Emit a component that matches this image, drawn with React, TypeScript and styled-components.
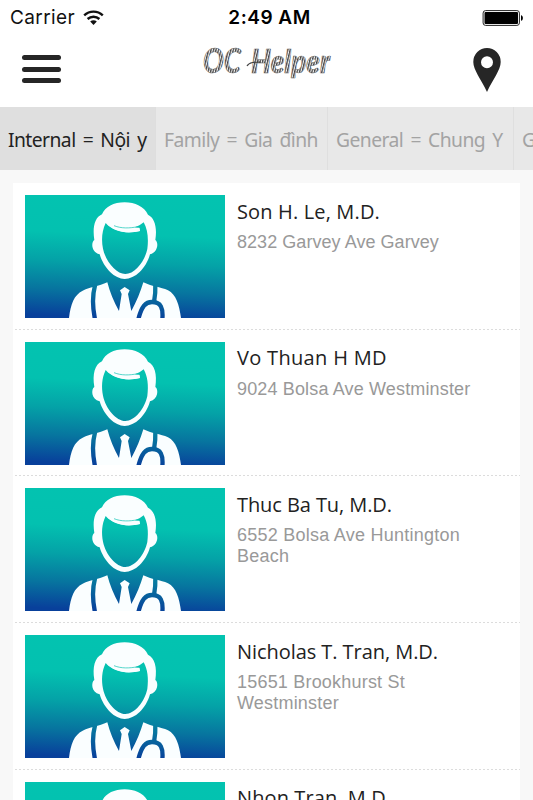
import React from 'react';
import styled, { createGlobalStyle } from 'styled-components';

const GlobalStyle = createGlobalStyle`
  html, body { margin: 0; padding: 0; background: #f8f8f8; }
  body { overflow: hidden; }
  * { box-sizing: border-box; }
`;

const Screen = styled.div`
  width: 533px;
  height: 800px;
  overflow: hidden;
  display: flex;
  flex-direction: column;
  background: #f8f8f8;
`;

const StatusBar = styled.div`
  height: 34px;
  flex: none;
  display: grid;
  grid-template-columns: 1fr auto 1fr;
  align-items: center;
  padding: 0 9px 0 10px;
  background: #fff;
  color: #111;
  font: 400 19px/34px Inter, sans-serif;
`;

const Carrier = styled.div`
  display: flex;
  align-items: center;
  gap: 8px;
  padding-top: 1px;
  letter-spacing: 0.4px;
`;

const Clock = styled.div`
  padding-left: 5px;
  font-weight: 600;
  font-size: 19px;
  letter-spacing: 0.5px;
  color: #000;
`;

const BatteryIcon = styled.svg`
  justify-self: end;
`;

const Header = styled.header`
  height: 73px;
  flex: none;
  display: flex;
  justify-content: space-between;
  align-items: flex-start;
  padding: 0 32px 0 22px;
  background: #fff;
`;

const MenuButton = styled.button`
  width: 39px;
  height: 28px;
  margin-top: 21px;
  padding: 0;
  border: 0;
  background: none;
  display: flex;
  flex-direction: column;
  justify-content: space-between;
`;

const MenuBar = styled.span`
  width: 39px;
  height: 5px;
  border-radius: 2.5px;
  background: #262626;
`;

const Logo = styled.svg`
  margin: 4px 0 0 1px;
`;

const PinButton = styled.button`
  margin-top: 14px;
  padding: 0;
  border: 0;
  background: none;
  line-height: 0;
`;

const Tabs = styled.nav`
  height: 63px;
  flex: none;
  display: flex;
  background: #e8e8e8;
`;

const Tab = styled.div<{ $width: number; $active?: boolean }>`
  flex: none;
  width: ${p => p.$width}px;
  padding: 0 0 0 8px;
  border-right: 1px solid ${p => (p.$active ? '#dedede' : '#dfdfdf')};
  background: ${p => (p.$active ? '#dfdfdf' : '#e8e8e8')};
  color: ${p => (p.$active ? '#222' : '#a3a3a3')};
  font: 400 19.3px/66px "Noto Sans", sans-serif;
  letter-spacing: -0.55px;
  word-spacing: 2.7px;
  white-space: nowrap;
`;

const List = styled.main`
  flex: none;
  margin: 13px 13px 0;
  background: #fff;
`;

const Row = styled.article`
  height: 146.67px;
  display: flex;
  gap: 12px;
  padding: 12px 12px 0;
  background: repeating-linear-gradient(90deg, #dcdcdc 0 2px, #fff 2px 4px) 2px 100% / 100% 1px no-repeat;
`;

const Info = styled.div`
  width: 250px;
`;

const Name = styled.h2<{ $spacing: number }>`
  margin: 1.6px 0 0;
  color: #222;
  font: 400 20px/30px "Open Sans", sans-serif;
  letter-spacing: ${p => p.$spacing}px;
  white-space: nowrap;
`;

const Address = styled.p<{ $spacing: number }>`
  margin: 5.4px 0 0;
  color: #999;
  font: 400 18px/21px "Liberation Sans", Arial, sans-serif;
  letter-spacing: ${p => p.$spacing}px;
`;

const Avatar = styled.svg`
  display: block;
  flex: none;
`;

function DoctorAvatar({ id }: { id: number }) {
  const g = `sky${id}`;
  const fill = `url(#${g})`;
  return (
    <Avatar width="200" height="123" viewBox="15 15 600 369" preserveAspectRatio="none">
      <defs>
        <linearGradient id={g} gradientUnits="userSpaceOnUse" x1="315" y1="15" x2="300" y2="384">
          <stop offset="0" stopColor="#03c3b0" />
          <stop offset="0.32" stopColor="#03c1b0" />
          <stop offset="0.55" stopColor="#04a2a7" />
          <stop offset="0.78" stopColor="#07759f" />
          <stop offset="1" stopColor="#08409b" />
        </linearGradient>
      </defs>
      <rect x="15" y="15" width="600" height="369" fill={fill} />
      <g fill="#fafeff">
        <path d="M314 37C281 37 255 51 246 73C224 83 217 111 223 150C213 156 213 187 239 193C252 236 285 267 314 267C345 267 378 236 390 193C415 187 416 156 406 150C412 111 404 84 384 74C373 50 345 37 314 37Z" />
        <path d="M147 384C152 342 162 315 188 302C206 293 238 288 262 277C269 305 281 335 297 363L305 312L300 301L314 291L329 301L324 312L334 363C350 335 361 306 370 277C393 289 422 291 444 301C468 313 478 345 483 384Z" />
      </g>
      <path fill={fill} d="M257 99C245 124 244 151 249 176C257 215 289 252 316 252C344 252 374 215 382 177C386 145 383 119 371 97C363 104 354 109 345 112L358 114L360 123C322 133 281 124 257 99Z" />
      <path fill="#fafeff" d="M257 99C281 119 320 119 358 113L360 123C318 133 281 125 257 99Z" />
      <path fill="none" stroke={fill} strokeWidth="2" d="M282 107C304 116 330 115 353 110" />
      <g fill="none" stroke={fill} strokeWidth="13">
        <path d="M225 286C217 316 217 350 225 388" />
        <path d="M406 282C407 306 405 321 402 337" />
        <path d="M355 388C365 348 377 336 396 336C423 336 430 354 427 388" />
      </g>
    </Avatar>
  );
}

const tabs = [
  { label: 'Internal = Nội y', width: 156, active: true },
  { label: 'Family = Gia đình', width: 172 },
  { label: 'General = Chung Y', width: 186 },
  { label: 'G', width: 60 },
];

const doctors = [
  { name: 'Son H. Le, M.D.', address: '8232 Garvey Ave Garvey', ns: 0.15, as: 0.05 },
  { name: 'Vo Thuan H MD', address: '9024 Bolsa Ave Westminster', ns: 0.32, as: 0.15 },
  { name: 'Thuc Ba Tu, M.D.', address: '6552 Bolsa Ave Huntington Beach', ns: -0.08, as: 0.25 },
  { name: 'Nicholas T. Tran, M.D.', address: '15651 Brookhurst St Westminster', ns: -0.06, as: 0.2 },
  { name: 'Nhon Tran, M.D.', address: '', ns: 0.1, as: 0 },
];

export default function App() {
  return (
    <>
      <GlobalStyle />
      <Screen>
        <StatusBar>
          <Carrier>
            Carrier
            <svg width="21" height="16" viewBox="0 0 21 16">
              <g fill="none" stroke="#111" strokeWidth="2.4">
                <path d="M1.2 5.4C6.5 .4 14.5 .4 19.8 5.4" />
                <path d="M4.6 9C8 5.9 13 5.9 16.4 9" />
              </g>
              <path fill="#111" d="M7.2 11.5C9 9.8 12 9.8 13.8 11.5L10.5 15Z" />
            </svg>
          </Carrier>
          <Clock>2:49 AM</Clock>
          <BatteryIcon width="42" height="16" viewBox="0 0 42 16">
            <rect x="1.1" y=".6" width="36.3" height="14.8" rx="2.5" fill="#fff" stroke="#222" strokeWidth="1" />
            <rect x="2.5" y="2" width="33.5" height="12" rx="1" />
            <path d="M39 5.2C41.5 5.5 41.5 10.5 39 10.8Z" />
          </BatteryIcon>
        </StatusBar>
        <Header>
          <MenuButton aria-label="Menu">
            <MenuBar />
            <MenuBar />
            <MenuBar />
          </MenuButton>
          <Logo width="134" height="52" viewBox="0 0 134 52">
            <defs>
              <pattern id="brush" width="2.4" height="8" patternUnits="userSpaceOnUse" patternTransform="rotate(14)">
                <rect width="2.4" height="8" fill="#f4f4f4" />
                <rect width="1.3" height="8" fill="#444" />
              </pattern>
            </defs>
            <g fontFamily="Lato, sans-serif" fontStyle="italic" fill="url(#brush)" stroke="#666" strokeWidth="0.5">
              <text x="2" y="35" fontSize="34" fontWeight="700" textLength="38" lengthAdjust="spacingAndGlyphs">OC</text>
              <text x="50" y="35" fontSize="32" fontWeight="900" textLength="79" lengthAdjust="spacingAndGlyphs">Helper</text>
            </g>
            <path fill="none" stroke="#444" strokeWidth="1.2" d="M46 28C48 24 54 24 60 24" />
          </Logo>
          <PinButton aria-label="Nearby">
            <svg width="28" height="44" viewBox="0 0 28 44">
              <path fill="#262626" fillRule="evenodd" d="M14 0A13.7 14 0 0 0 .3 14C.3 22 8 31 14 44C20 31 27.7 22 27.7 14A13.7 14 0 0 0 14 0ZM14 8.2A6 6 0 1 1 14 20.2A6 6 0 0 1 14 8.2Z" />
            </svg>
          </PinButton>
        </Header>
        <Tabs>
          {tabs.map(t => (
            <Tab key={t.label} $width={t.width} $active={t.active}>
              {t.label}
            </Tab>
          ))}
        </Tabs>
        <List>
          {doctors.map((d, i) => (
            <Row key={d.name}>
              <DoctorAvatar id={i} />
              <Info>
                <Name $spacing={d.ns}>{d.name}</Name>
                <Address $spacing={d.as}>{d.address}</Address>
              </Info>
            </Row>
          ))}
        </List>
      </Screen>
    </>
  );
}
